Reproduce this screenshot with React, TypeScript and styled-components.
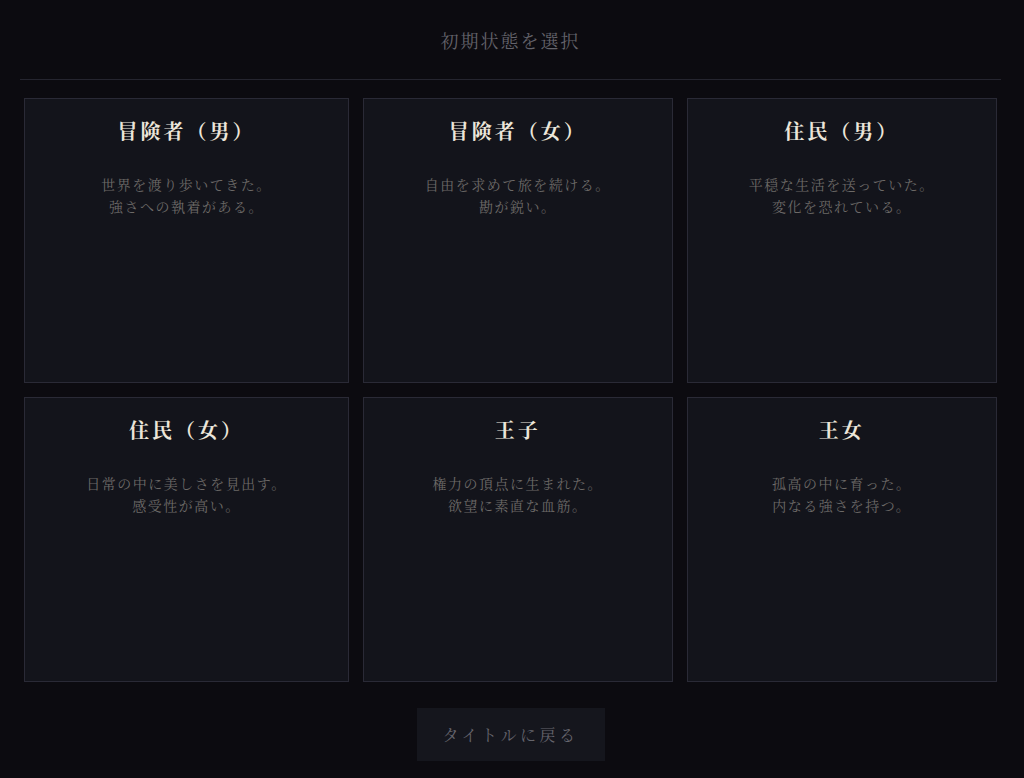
import React from "react";
import styled, { createGlobalStyle } from "styled-components";

type Origin = {
  id: string;
  name: string;
  lines: string[];
};

const origins: Origin[] = [
  { id: "adv-m", name: "冒険者（男）", lines: ["世界を渡り歩いてきた。", "強さへの執着がある。"] },
  { id: "adv-f", name: "冒険者（女）", lines: ["自由を求めて旅を続ける。", "勘が鋭い。"] },
  { id: "res-m", name: "住民（男）", lines: ["平穏な生活を送っていた。", "変化を恐れている。"] },
  { id: "res-f", name: "住民（女）", lines: ["日常の中に美しさを見出す。", "感受性が高い。"] },
  { id: "prince", name: "王子", lines: ["権力の頂点に生まれた。", "欲望に素直な血筋。"] },
  { id: "princess", name: "王女", lines: ["孤高の中に育った。", "内なる強さを持つ。"] },
];

const GlobalStyle = createGlobalStyle`
  html, body {
    margin: 0;
    padding: 0;
    background: #0c0b10;
  }
  body {
    font-family: "Noto Serif CJK JP", "Noto Sans CJK JP", serif;
  }
  * {
    box-sizing: border-box;
  }
`;

export default function App() {
  return (
    <>
      <GlobalStyle />
      <Page>
        <Header>
          <Heading>初期状態を選択</Heading>
        </Header>

        <Grid>
          {origins.map((o) => (
            <Card key={o.id} type="button">
              <CardTitle>{o.name}</CardTitle>
              <CardText>
                {o.lines.map((l) => (
                  <span key={l}>{l}</span>
                ))}
              </CardText>
            </Card>
          ))}
        </Grid>

        <Footer>
          <BackButton type="button">タイトルに戻る</BackButton>
        </Footer>
      </Page>
    </>
  );
}

const Page = styled.div`
  height: 100vh;
  display: flex;
  flex-direction: column;
  padding: 0 23px 0 20px;
  background: #0c0b10;
`;

const Header = styled.header`
  height: 80px;
  flex: none;
  display: flex;
  align-items: center;
  justify-content: center;
  border-bottom: 1px solid #25252f;
`;

const Heading = styled.h1`
  margin: 0;
  font-size: 18px;
  font-weight: 400;
  letter-spacing: 2px;
  color: #64636b;
`;

const Grid = styled.div`
  flex: 1;
  min-height: 0;
  margin-top: 18px;
  display: grid;
  grid-template-columns: repeat(3, auto);
  grid-template-rows: repeat(2, 1fr);
  justify-content: center;
  gap: 14px;
`;

const Card = styled.button`
  display: flex;
  flex-direction: column;
  align-items: center;
  padding: 20px 61px;
  background: #13141b;
  border: 1px solid #2a2a36;
  font-family: inherit;
  cursor: pointer;
  text-align: center;
`;

const CardTitle = styled.h2`
  margin: 0 0 30px;
  font-size: 20px;
  line-height: 24px;
  font-weight: 700;
  letter-spacing: 3px;
  color: #ece6da;
`;

const CardText = styled.p`
  margin: 0;
  display: flex;
  flex-direction: column;
  font-size: 14px;
  line-height: 22px;
  letter-spacing: 1.5px;
  color: #6c6967;
  white-space: nowrap;
`;

const Footer = styled.footer`
  flex: none;
  display: flex;
  justify-content: center;
  padding: 26px 0 17px;
`;

const BackButton = styled.button`
  width: 188px;
  height: 53px;
  background: #15161d;
  border: none;
  font-family: inherit;
  font-size: 16px;
  letter-spacing: 3.5px;
  color: #66656d;
  cursor: pointer;
`;
